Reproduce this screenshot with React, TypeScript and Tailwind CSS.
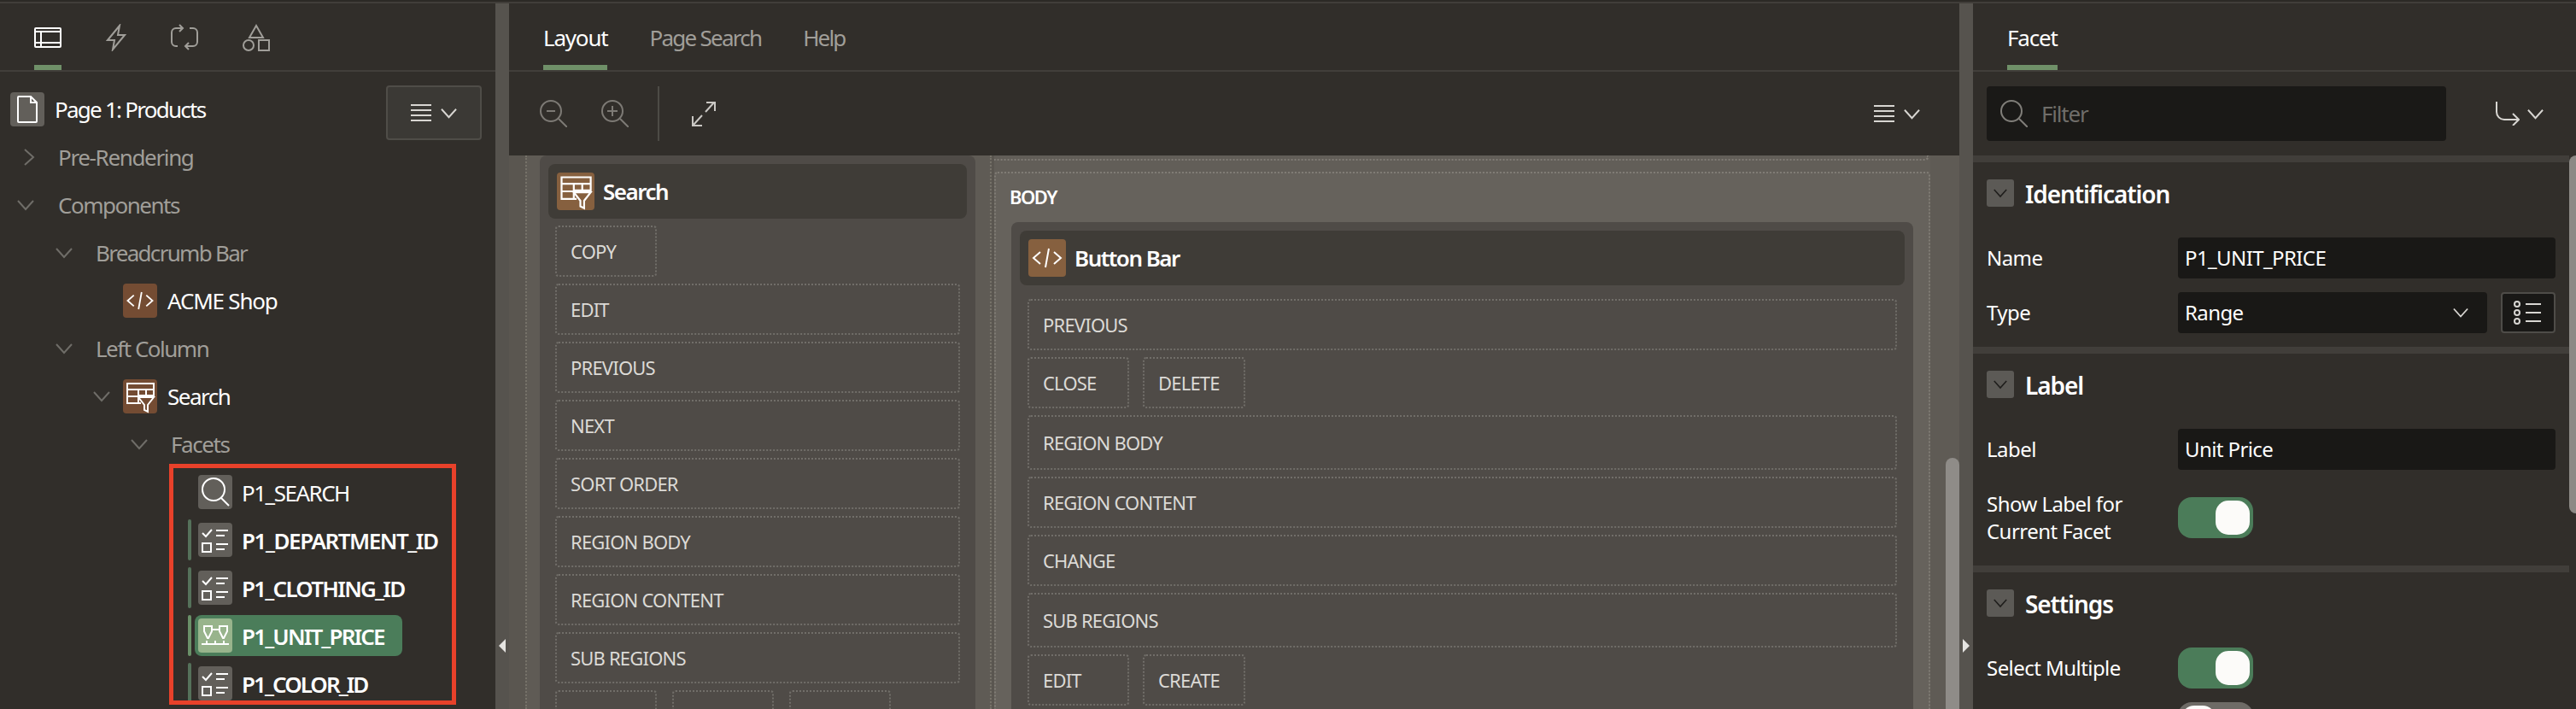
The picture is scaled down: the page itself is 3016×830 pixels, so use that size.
import type { ReactNode } from 'react';

const Chevron = ({ dir = 'down', className = '' }: { dir?: 'down' | 'right'; className?: string }) => (
  <svg viewBox="0 0 20 20" className={className} fill="none" stroke="currentColor" strokeWidth="2">
    {dir === 'down' ? <path d="M1 5l9 10 9-10" /> : <path d="M5 1l10 9-10 9" />}
  </svg>
);

const Hamburger = () => (
  <svg viewBox="0 0 24 20" className="w-[24px] h-[20px] text-[#d8d6d2]" fill="none" stroke="currentColor" strokeWidth="2">
    <path d="M0 1h24M0 7h24M0 13h24M0 19h24" />
  </svg>
);

const CodeIcon = () => (
  <svg viewBox="0 0 44 44" className="w-full h-full" fill="none" stroke="#fff" strokeWidth="2">
    <path d="M14 15l-8 7 8 7M30 15l8 7-8 7M24 11l-4 22" />
  </svg>
);

const SearchTableIcon = () => (
  <svg viewBox="0 0 40 40" className="w-full h-full" fill="none" stroke="#fff" strokeWidth="2">
    <path d="M21 28H5V5h31v14H18M5 12h31M5 20h13M5 12v16M18 12v16M27 12v7" />
    <path d="M18 21h18l-7 9v8l-4-2v-6z" />
  </svg>
);

const MagnifierIcon = () => (
  <svg viewBox="0 0 40 40" className="w-full h-full" fill="none" stroke="#fff" strokeWidth="2">
    <circle cx="18" cy="17" r="13" />
    <path d="M27 27l9 9" />
  </svg>
);

const ChecklistIcon = () => (
  <svg viewBox="0 0 40 40" className="w-full h-full" fill="none" stroke="#fff" strokeWidth="2">
    <path d="M5 12l4 4 7-8M21 9h14M21 15h10M21 25h14M21 31h10" />
    <rect x="5" y="24" width="10" height="10" />
  </svg>
);

const RangeIcon = () => (
  <svg viewBox="0 0 40 40" className="w-full h-full" fill="none" stroke="#fff" strokeWidth="2">
    <path d="M7 9h9v6l-4 8h-1l-4-8zM25 9h9v6l-4 8h-1l-4-8zM16 13h9M4 30h32M10 26v4M20 26v4M30 26v4" />
  </svg>
);

const BrownIcon = ({ size, children }: { size: string; children: ReactNode }) => (
  <div className={`${size} shrink-0 rounded-[4px]`}>{children}</div>
);

const TreeLabel = ({ className, children }: { className: string; children: string }) => (
  <span className={`text-[26px] text-[#a09e99] whitespace-nowrap ${className}`}>{children}</span>
);

const TreeRow = ({ indent, dir, children }: { indent: string; dir?: 'down' | 'right'; children: ReactNode }) => (
  <div className={`h-[56px] flex items-center ${indent}`}>
    <Chevron dir={dir} className="w-[20px] h-[20px] text-[#6f6d68] shrink-0" />
    {children}
  </div>
);

const facets = [
  { name: 'P1_SEARCH', icon: <MagnifierIcon />, bar: false, selected: false, text: 'font-normal tracking-[-1.5px]' },
  { name: 'P1_DEPARTMENT_ID', icon: <ChecklistIcon />, bar: true, selected: false, text: 'font-semibold tracking-[-1.45px]' },
  { name: 'P1_CLOTHING_ID', icon: <ChecklistIcon />, bar: true, selected: false, text: 'font-semibold tracking-[-1.75px]' },
  { name: 'P1_UNIT_PRICE', icon: <RangeIcon />, bar: true, selected: true, text: 'font-semibold tracking-[-1.85px]' },
  { name: 'P1_COLOR_ID', icon: <ChecklistIcon />, bar: true, selected: false, text: 'font-semibold tracking-[-1.95px]' },
];

const Slot = ({ label, className = '' }: { label?: string; className?: string }) => (
  <div className={`border-2 border-dotted border-[#716e69] rounded-[4px] flex items-center pl-[16px] text-[22px] tracking-[-0.8px] text-[#dcdad6] whitespace-nowrap ${className}`}>
    {label}
  </div>
);

const Tab = ({ label, active, tracking }: { label: string; active?: boolean; tracking: string }) => (
  <div className="h-full flex flex-col">
    <div className={`flex-1 flex items-center pt-[8px] text-[26px] ${tracking} ${active ? 'text-white' : 'text-[#a09e99]'}`}>{label}</div>
    <div className={`h-[6px] ${active ? 'bg-[#6f9068]' : ''}`} />
  </div>
);

const Section = ({ title, children }: { title: string; children: ReactNode }) => (
  <div>
    <div className="h-[8px] bg-[#413e3a]" />
    <div className="pt-[20px] pl-[16px] pr-[16px] pb-[16px]">
      <div className="flex items-center h-[32px] gap-[13px] mb-[36px]">
        <div className="w-[32px] h-[32px] rounded-[3px] bg-[#5c5a56] flex items-center justify-center">
          <Chevron className="w-[16px] h-[16px] text-[#1f1e1c]" />
        </div>
        <span className="pt-[2px] text-[28px] font-semibold tracking-[-1.1px] text-white">{title}</span>
      </div>
      <div className="flex flex-col gap-[16px]">{children}</div>
    </div>
  </div>
);

const Field = ({ label, tall, children }: { label: string; tall?: boolean; children: ReactNode }) => (
  <div className={`flex items-center ${tall ? 'h-[80px]' : 'min-h-[48px]'}`}>
    <div className="w-[224px] text-[24px] leading-[32px] tracking-[-0.55px] text-white">{label}</div>
    {children}
  </div>
);

const TextValue = ({ value }: { value: string }) => (
  <div className="w-[442px] h-[48px] rounded-[4px] bg-[#191816] flex items-center pl-[8px] text-[24px] tracking-[-0.6px] text-white">{value}</div>
);

const Toggle = ({ on = true }: { on?: boolean }) => (
  <div className={`w-[88px] h-[48px] rounded-[16px] p-[4px] flex ${on ? 'bg-[#4b7c59] justify-end' : 'bg-[#6e6b66] justify-start'}`}>
    <div className="w-[40px] h-[40px] rounded-[15px] bg-[#fcfbf9]" />
  </div>
);

const Splitter = ({ dir }: { dir: 'left' | 'right' }) => (
  <div className="w-[16px] bg-[#56534e] shrink-0 pt-[744px] flex justify-center">
    <svg viewBox="0 0 8 16" className="w-[8px] h-[16px]" fill="#e5e4e1">
      {dir === 'left' ? <path d="M8 0v16L0 8z" /> : <path d="M0 0v16l8-8z" />}
    </svg>
  </div>
);

export default function App() {
  return (
    <div className="w-[3016px] h-[830px] overflow-hidden flex flex-col bg-[#312e2a] font-['Noto_Sans',sans-serif]">
      <div className="h-[2px] bg-[#2c2a26]" />
      <div className="h-[2px] bg-[#413e3a]" />
      <div className="flex flex-1 min-h-0">
        {/* left tree */}
        <div className="w-[580px] shrink-0 overflow-hidden">
          <div className="h-[80px] border-b-2 border-[#413e3a] pl-[40px] flex gap-[52px]">
            <div className="flex flex-col h-full w-[32px]">
              <div className="flex-1 flex items-center pt-[8px]">
                <svg viewBox="0 0 32 24" className="w-[32px] h-[24px]" fill="none" stroke="#fff" strokeWidth="2">
                  <rect x="1" y="1" width="30" height="22" rx="1" />
                  <path d="M1 5h30M1 18h30M8 5v18" />
                </svg>
              </div>
              <div className="h-[6px] bg-[#6f9068]" />
            </div>
            <div className="flex items-center h-[78px] pt-[2px] w-[24px]">
              <svg viewBox="0 0 24 32" className="w-[24px] h-[32px]" fill="none" stroke="#a09e99" strokeWidth="2">
                <path d="M16 2L2 19h8l-2 11 14-17h-8z" />
              </svg>
            </div>
            <div className="flex items-center h-[78px] pt-[2px] w-[32px]">
              <svg viewBox="0 0 32 32" className="w-[32px] h-[32px]" fill="none" stroke="#a09e99" strokeWidth="2">
                <path d="M14 5H6a5 5 0 0 0-5 5v11a5 5 0 0 0 5 5h2M10 1l4 4-4 4M22 5h4a5 5 0 0 1 5 5v11a5 5 0 0 1-5 5h-9M21 22l-4 4 4 4" />
              </svg>
            </div>
            <div className="flex items-center h-[78px] pt-[2px] w-[32px]">
              <svg viewBox="0 0 32 32" className="w-[32px] h-[32px]" fill="none" stroke="#a09e99" strokeWidth="2">
                <path d="M16 2l8 14H8z" />
                <circle cx="7" cy="25" r="6" />
                <rect x="19" y="19" width="12" height="12" />
              </svg>
            </div>
          </div>

          <div className="h-[72px] flex items-start justify-between pl-[12px] pr-[16px] pt-[16px]">
            <div className="flex items-center gap-[12px] mt-[8px]">
              <div className="w-[40px] h-[40px] rounded-[4px] bg-[#625f5a] flex items-center justify-center">
                <svg viewBox="0 0 24 32" className="w-[24px] h-[32px]" fill="none" stroke="#fff" strokeWidth="2">
                  <path d="M2 1h14l7 7v22a1 1 0 0 1-1 1H2a1 1 0 0 1-1-1V2a1 1 0 0 1 1-1zM16 1v7h7" />
                </svg>
              </div>
              <span className="text-[26px] tracking-[-1.75px] text-white">Page 1: Products</span>
            </div>
            <div className="w-[112px] h-[64px] border-2 border-[#4f4d48] rounded-[4px] bg-[#3b3935] flex items-center justify-center gap-[11px]">
              <Hamburger />
              <Chevron className="w-[19px] h-[19px] text-[#d8d6d2]" />
            </div>
          </div>

          <TreeRow indent="pl-[24px]" dir="right">
            <span className="ml-[24px]"><TreeLabel className="tracking-[-1.35px]">Pre-Rendering</TreeLabel></span>
          </TreeRow>
          <TreeRow indent="pl-[20px]">
            <span className="ml-[28px]"><TreeLabel className="tracking-[-1.5px]">Components</TreeLabel></span>
          </TreeRow>
          <TreeRow indent="pl-[65px]">
            <span className="ml-[27px]"><TreeLabel className="tracking-[-1.7px]">Breadcrumb Bar</TreeLabel></span>
          </TreeRow>
          <div className="h-[56px] flex items-center pl-[144px] gap-[12px]">
            <BrownIcon size="w-[40px] h-[40px] bg-[#744c33]"><CodeIcon /></BrownIcon>
            <span className="text-[26px] tracking-[-1.2px] text-white">ACME Shop</span>
          </div>
          <TreeRow indent="pl-[65px]">
            <span className="ml-[27px]"><TreeLabel className="tracking-[-1.5px]">Left Column</TreeLabel></span>
          </TreeRow>
          <TreeRow indent="pl-[109px]">
            <BrownIcon size="w-[40px] h-[40px] ml-[15px] bg-[#744c33]"><SearchTableIcon /></BrownIcon>
            <span className="ml-[12px] text-[26px] tracking-[-1.5px] text-white">Search</span>
          </TreeRow>
          <TreeRow indent="pl-[153px]">
            <span className="ml-[27px]"><TreeLabel className="tracking-[-1.4px]">Facets</TreeLabel></span>
          </TreeRow>

          <div className="-mt-[5px] ml-[198px] w-[336px] h-[282px] border-[5px] border-[#e8412a] overflow-hidden pl-[17px]">
            {facets.map((f) => (
              <div key={f.name} className="h-[56px] flex items-center">
                <div className={`w-[4px] h-[48px] rounded-[2px] shrink-0 ${f.bar ? (f.selected ? 'bg-[#6a9068]' : 'bg-[#55715a]') : ''}`} />
                <div className={`ml-[4px] h-[48px] pl-[4px] flex items-center rounded-[8px] ${f.selected ? 'w-[243px] bg-[#4b7d5a]' : ''}`}>
                  <div className={`w-[40px] h-[40px] rounded-[4px] shrink-0 ${f.selected ? 'bg-[#98b48c]' : 'bg-[#625f5a]'}`}>{f.icon}</div>
                  <span className={`ml-[11px] pt-[2px] text-[26px] text-white whitespace-nowrap ${f.text}`}>{f.name}</span>
                </div>
              </div>
            ))}
          </div>
        </div>

        <Splitter dir="left" />

        {/* center layout */}
        <div className="w-[1698px] shrink-0 flex flex-col min-w-0">
          <div className="h-[80px] border-b-2 border-[#413e3a] pl-[40px] flex gap-[49px]">
            <Tab label="Layout" active tracking="tracking-[-1.2px]" />
            <Tab label="Page Search" tracking="tracking-[-1.75px]" />
            <Tab label="Help" tracking="tracking-[-1.9px]" />
          </div>
          <div className="h-[98px] flex items-center pl-[36px] pr-[46px]">
            <svg viewBox="0 0 32 32" className="w-[32px] h-[32px]" fill="none" stroke="#7d7a75" strokeWidth="2">
              <circle cx="13" cy="13" r="12" />
              <path d="M22 22l10 10M8 13h10" />
            </svg>
            <svg viewBox="0 0 32 32" className="w-[32px] h-[32px] ml-[40px]" fill="none" stroke="#7d7a75" strokeWidth="2">
              <circle cx="13" cy="13" r="12" />
              <path d="M22 22l10 10M7 13h12M13 7v12" />
            </svg>
            <div className="w-[2px] h-[64px] bg-[#4d4b46] ml-[34px]" />
            <svg viewBox="0 0 28 30" className="w-[28px] h-[30px] ml-[38px]" fill="none" stroke="#c9c7c3" strokeWidth="2">
              <path d="M16 13L26 2M17 2h10v10M12 17L2 28M1 18v11h11" />
            </svg>
            <div className="ml-auto flex items-center gap-[11px]">
              <Hamburger />
              <Chevron className="w-[19px] h-[19px] text-[#d8d6d2]" />
            </div>
          </div>

          <div className="flex-1 min-h-0 flex overflow-hidden bg-[#5a5650]">
            <div className="ml-[19px] w-[546px] shrink-0 border-x-2 border-dotted border-[#767269] px-[15px] bg-[#5f5b55]">
              <div className="w-[510px] h-[648px] rounded-t-[8px] bg-[#4f4b47] pt-[10px] px-[10px]">
                <div className="h-[64px] rounded-[8px] bg-[#3f3c37] flex items-center pl-[10px] gap-[10px]">
                  <BrownIcon size="w-[44px] h-[44px] bg-[#86603f]"><SearchTableIcon /></BrownIcon>
                  <span className="text-[26px] font-semibold tracking-[-1.5px] text-white">Search</span>
                </div>
                <div className="px-[8px] pt-[8px] flex flex-col gap-[8px]">
                  <Slot label="COPY" className="w-[119px] h-[60px]" />
                  <Slot label="EDIT" className="h-[60px]" />
                  <Slot label="PREVIOUS" className="h-[60px]" />
                  <Slot label="NEXT" className="h-[60px]" />
                  <Slot label="SORT ORDER" className="h-[60px]" />
                  <Slot label="REGION BODY" className="h-[60px]" />
                  <Slot label="REGION CONTENT" className="h-[60px]" />
                  <Slot label="SUB REGIONS" className="h-[60px]" />
                  <div className="flex gap-[18px]">
                    <Slot className="w-[119px] h-[60px]" />
                    <Slot className="w-[119px] h-[60px]" />
                    <Slot className="w-[119px] h-[60px]" />
                  </div>
                </div>
              </div>
            </div>

            <div className="ml-[3px] w-[1096px] shrink-0 bg-[#625e58]">
              <div className="h-[6px] border-b-2 border-r-2 border-dotted border-[#807c75] rounded-br-[4px] mr-[2px]" />
              <div className="mt-[13px] h-[640px] border-2 border-b-0 border-dotted border-[#807c75] rounded-t-[4px] bg-[#66625c] pl-[18px]">
                <div className="h-[57px] -ml-[2px] pb-[3px] flex items-center text-[22px] font-semibold tracking-[-1.5px] text-white">BODY</div>
                <div className="w-[1056px] h-[580px] rounded-t-[8px] bg-[#4f4b47] pt-[10px] px-[10px]">
                  <div className="h-[64px] rounded-[8px] bg-[#3f3c37] flex items-center pl-[10px] gap-[10px]">
                    <BrownIcon size="w-[44px] h-[44px] bg-[#86603f]"><CodeIcon /></BrownIcon>
                    <span className="text-[26px] font-semibold tracking-[-1.5px] text-white">Button Bar</span>
                  </div>
                  <div className="pl-[9px] pr-[9px] pt-[16px] flex flex-col gap-[8px]">
                    <Slot label="PREVIOUS" className="h-[60px]" />
                    <div className="flex gap-[16px]">
                      <Slot label="CLOSE" className="w-[119px] h-[60px]" />
                      <Slot label="DELETE" className="w-[120px] h-[60px]" />
                    </div>
                    <Slot label="REGION BODY" className="h-[64px]" />
                    <Slot label="REGION CONTENT" className="h-[60px]" />
                    <Slot label="CHANGE" className="h-[60px]" />
                    <Slot label="SUB REGIONS" className="h-[64px]" />
                    <div className="flex gap-[16px]">
                      <Slot label="EDIT" className="w-[119px] h-[60px]" />
                      <Slot label="CREATE" className="w-[120px] h-[60px]" />
                    </div>
                  </div>
                </div>
              </div>
            </div>

            <div className="w-[34px] shrink-0 flex justify-end bg-[#5f5b55]">
              <div className="w-[16px] h-[294px] mt-[354px] rounded-t-[8px] bg-[#8f8c88]" />
            </div>
          </div>
        </div>

        <Splitter dir="right" />

        {/* right properties */}
        <div className="flex-1 min-w-0 flex flex-col">
          <div className="h-[80px] border-b-2 border-[#413e3a] pl-[40px] flex">
            <Tab label="Facet" active tracking="tracking-[-1.2px]" />
          </div>
          <div className="h-[98px] flex items-center pl-[16px]">
            <div className="w-[538px] h-[64px] rounded-[4px] bg-[#1a1917] flex items-center pl-[16px] gap-[16px]">
              <svg viewBox="0 0 32 32" className="w-[32px] h-[32px]" fill="none" stroke="#807e79" strokeWidth="2">
                <circle cx="13" cy="13" r="12" />
                <path d="M22 22l10 10" />
              </svg>
              <span className="text-[26px] tracking-[-1.2px] text-[#6f6d69]">Filter</span>
            </div>
            <svg viewBox="0 0 28 28" className="w-[28px] h-[28px] ml-[58px]" fill="none" stroke="#d8d6d2" strokeWidth="2">
              <path d="M1 0v12a9 9 0 0 0 9 9h17M20 14l7 7-7 7" />
            </svg>
            <Chevron className="w-[19px] h-[19px] ml-[9px] text-[#d8d6d2]" />
          </div>
          <div className="flex-1 min-h-0 flex overflow-hidden">
            <div className="flex-1 min-w-0">
              <Section title="Identification">
                <Field label="Name"><TextValue value="P1_UNIT_PRICE" /></Field>
                <Field label="Type">
                  <div className="w-[362px] h-[48px] rounded-[4px] bg-[#191816] flex items-center justify-between pl-[8px] pr-[22px] text-[24px] tracking-[-0.6px] text-white">
                    Range
                    <Chevron className="w-[18px] h-[18px] text-[#d8d6d2]" />
                  </div>
                  <div className="w-[64px] h-[48px] ml-[16px] rounded-[4px] border-2 border-[#4e4c48] bg-[#191816] flex items-center justify-center">
                    <svg viewBox="0 0 34 30" className="w-[34px] h-[30px]" fill="none" stroke="#d8d6d2" strokeWidth="2">
                      <circle cx="4" cy="5" r="3" />
                      <circle cx="4" cy="15" r="3" />
                      <circle cx="4" cy="25" r="3" />
                      <path d="M14 5h18M14 15h18M14 25h18" />
                    </svg>
                  </div>
                </Field>
              </Section>
              <Section title="Label">
                <Field label="Label"><TextValue value="Unit Price" /></Field>
                <Field label="Show Label for Current Facet" tall><Toggle /></Field>
              </Section>
              <Section title="Settings">
                <Field label="Select Multiple"><Toggle /></Field>
                <Field label=""><Toggle on={false} /></Field>
              </Section>
            </div>
            <div className="w-[8px] shrink-0">
              <div className="h-[419px] rounded-l-[8px] bg-[#8c8985]" />
            </div>
          </div>
        </div>
      </div>
    </div>
  );
}
